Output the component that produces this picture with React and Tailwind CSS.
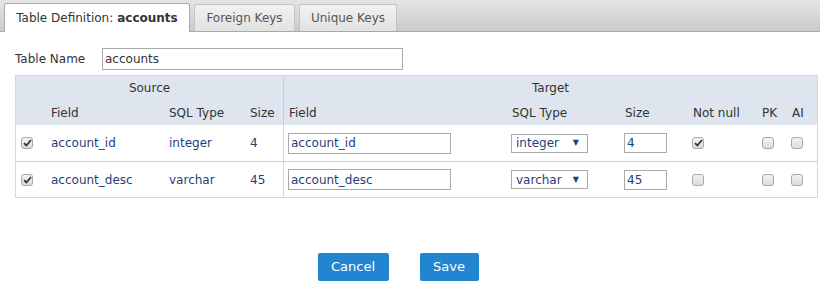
import React from "react";

const cols = "grid grid-cols-[25px_118px_81px_43px_219px_113px_68px_69px_30px_35px]";

function Check({ checked }) {
  return (
    <span className="inline-flex h-[12px] w-[12px] items-center justify-center rounded-[3px] border border-[#a9a9a9] bg-gradient-to-b from-[#f2f2f2] to-[#dcdcdc]">
      {checked && (
        <svg width="9" height="8" viewBox="0 0 9 8">
          <path d="M1 4.2 L3.4 6.5 L8 1" fill="none" stroke="#333" strokeWidth="1.8" />
        </svg>
      )}
    </span>
  );
}

function Select({ value }) {
  return (
    <div className="flex h-[19px] w-[77px] items-center justify-between border border-[#aaa] bg-white pl-[4px] pr-[8px] text-[#1f3f7a]">
      <span>{value}</span>
      <span className="text-[8px] text-[#1f3f7a]">▼</span>
    </div>
  );
}

const rows = [
  { field: "account_id", type: "integer", size: "4", notNull: true },
  { field: "account_desc", type: "varchar", size: "45", notNull: false },
];

export default function App() {
  return (
    <div className="h-[289px] w-[820px] bg-white text-[12px] text-[#333]" style={{ fontFamily: "'DejaVu Sans', Verdana, sans-serif" }}>
      {/* Tabs */}
      <div className="flex h-[32px] items-end gap-[4px] border-b border-[#a8a8a8] bg-gradient-to-b from-[#e4e4e4] to-[#cbcbcb] pl-[4px]">
        <div className="-mb-px flex h-[29px] w-[186px] items-center justify-center rounded-t-[3px] border border-b-0 border-[#aaa] bg-white">
          Table Definition: <b className="ml-[4px]">accounts</b>
        </div>
        <div className="flex h-[27px] w-[101px] items-center justify-center rounded-t-[3px] border border-b-0 border-[#c4c4c4] bg-gradient-to-b from-[#f1f1f1] to-[#e2e2e2] text-[#555]">
          Foreign Keys
        </div>
        <div className="flex h-[27px] w-[98px] items-center justify-center rounded-t-[3px] border border-b-0 border-[#c4c4c4] bg-gradient-to-b from-[#f1f1f1] to-[#e2e2e2] text-[#555]">
          Unique Keys
        </div>
      </div>

      <div className="px-[15px] pt-[16px]">
        <div className="flex items-center">
          <span className="w-[87px]">Table Name</span>
          <div className="flex h-[22px] w-[301px] items-center border border-[#aaa] pl-[2px]">accounts</div>
        </div>

        {/* Table */}
        <div className="mt-[5px] w-[803px] border border-[#d3d8df]">
          <div className="bg-[#dfe5ee]">
            <div className="flex h-[24px] items-center">
              <div className="w-[267px] text-center">Source</div>
              <div className="h-full border-l border-[#c9ced6]" />
              <div className="flex-1 text-center">Target</div>
            </div>
            <div className={`${cols} h-[25px] items-center`}>
              <div />
              <div className="pl-[10px]">Field</div>
              <div className="pl-[10px]">SQL Type</div>
              <div className="pl-[10px]">Size</div>
              <div className="flex h-full items-center border-l border-[#c9ced6] pl-[5px]">Field</div>
              <div className="pl-[10px]">SQL Type</div>
              <div className="pl-[10px]">Size</div>
              <div className="pl-[10px]">Not null</div>
              <div className="pl-[10px]">PK</div>
              <div className="pl-[10px]">AI</div>
            </div>
          </div>
          {rows.map((r, i) => (
            <div key={i} className={`${cols} h-[36px] items-center ${i > 0 ? "border-t border-[#ccc]" : ""} text-[#1f3f7a]`}>
              <div className="flex pl-[5px]"><Check checked /></div>
              <div className="pl-[10px]">{r.field}</div>
              <div className="pl-[10px]">{r.type}</div>
              <div className="pl-[10px]">{r.size}</div>
              <div className="flex h-full items-center border-l border-[#d6d6d6] pl-[4px]">
                <div className="flex h-[21px] w-[163px] items-center border border-[#aaa] pl-[2px]">{r.field}</div>
              </div>
              <div className="pl-[9px]"><Select value={r.type} /></div>
              <div className="pl-[9px]">
                <div className="flex h-[20px] w-[43px] items-center border border-[#aaa] pl-[2px]">{r.size}</div>
              </div>
              <div className="flex pl-[9px]"><Check checked={r.notNull} /></div>
              <div className="flex pl-[10px]"><Check /></div>
              <div className="flex pl-[9px]"><Check /></div>
            </div>
          ))}
        </div>

        <div className="mt-[55px] flex justify-center gap-[31px] pr-[24px] text-[13px] text-white">
          <button className="h-[28px] w-[71px] rounded-[2px] bg-[#2185d0]">Cancel</button>
          <button className="h-[28px] w-[59px] rounded-[2px] bg-[#2185d0]">Save</button>
        </div>
      </div>
    </div>
  );
}
